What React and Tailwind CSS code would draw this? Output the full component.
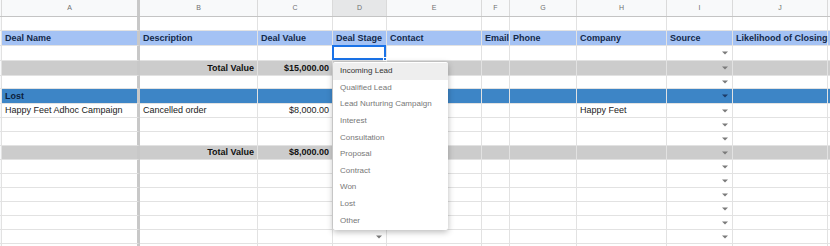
const cols = [
  { key: "stub", w: "w-[2px] bg-[#f8f9fa]" },
  { key: "A", w: "w-[138px] border-r-[3px] border-r-[#c8c8c8]" },
  { key: "B", w: "w-[118px]" },
  { key: "C", w: "w-[75px]" },
  { key: "D", w: "w-[54px]" },
  { key: "E", w: "w-[95px]" },
  { key: "F", w: "w-[28px]" },
  { key: "G", w: "w-[67px]" },
  { key: "H", w: "w-[90px]" },
  { key: "I", w: "w-[66px]" },
  { key: "J", w: "w-[95px]" },
  { key: "K", w: "w-[10px]" },
];

const headings = {
  A: "Deal Name",
  B: "Description",
  C: "Deal Value",
  D: "Deal Stage",
  E: "Contact",
  F: "Email",
  G: "Phone",
  H: "Company",
  I: "Source",
  J: "Likelihood of Closing",
};

const rows = [
  { h: "h-[14px]", type: "plain" },
  { h: "h-[15px]", type: "head" },
  { h: "h-[15px]", type: "plain", caret: true, selected: true },
  { h: "h-[15px]", type: "gray", caret: true, total: "$15,000.00" },
  { h: "h-[13px]", type: "plain", caret: true },
  { h: "h-[15px]", type: "blue", caret: true },
  {
    h: "h-[14px]",
    type: "plain",
    caret: true,
    data: { A: "Happy Feet Adhoc Campaign", B: "Cancelled order", C: "$8,000.00", H: "Happy Feet" },
  },
  { h: "h-[14px]", type: "plain", caret: true },
  { h: "h-[14px]", type: "plain", caret: true },
  { h: "h-[14px]", type: "gray", caret: true, total: "$8,000.00" },
  { h: "h-[14px]", type: "plain", caret: true },
  { h: "h-[14px]", type: "plain", caret: true },
  { h: "h-[14px]", type: "plain", caret: true },
  { h: "h-[14px]", type: "plain", caret: true },
  { h: "h-[14px]", type: "plain", caret: true },
  { h: "h-[14px]", type: "plain", caret: true, dCaret: true },
  { h: "h-[14px]", type: "plain", caret: true },
];

const stages = [
  "Incoming Lead",
  "Qualified Lead",
  "Lead Nurturing Campaign",
  "Interest",
  "Consultation",
  "Proposal",
  "Contract",
  "Won",
  "Lost",
  "Other",
];

const Caret = ({ dark }) => (
  <svg width="6" height="4" viewBox="0 0 6 4" className="absolute right-[4px] top-1/2 -translate-y-1/2">
    <path d="M0 0.5 L6 0.5 L3 3.5 Z" fill={dark ? "#1d3b66" : "#7a7a7a"} />
  </svg>
);

const rowBg = {
  plain: "bg-white",
  head: "bg-[#a4c2f4]",
  gray: "bg-[#cccccc]",
  blue: "bg-[#3d85c6]",
};

const Cell = ({ col, row }) => {
  let content = null;
  let align = "justify-start";
  let text = "text-[#222222] font-normal";

  if (row.type === "head" && headings[col.key]) {
    content = headings[col.key];
    text = "text-[#13294b] font-bold";
  }
  if (row.type === "blue" && col.key === "A") {
    content = "Lost";
    text = "text-[#0c1f3d] font-bold";
  }
  if (row.type === "gray" && col.key === "B") {
    content = "Total Value";
    align = "justify-end";
    text = "text-[#111111] font-bold";
  }
  if (row.type === "gray" && col.key === "C") {
    content = row.total;
    align = "justify-end";
    text = "text-[#111111] font-bold";
  }
  if (row.data && row.data[col.key]) {
    content = row.data[col.key];
    if (col.key === "C") align = "justify-end";
  }

  const bg = col.key === "stub" ? "" : rowBg[row.type];
  const pad = col.key === "stub" || col.key === "K" ? "" : "px-[3px]";

  return (
    <div
      className={`${col.w} ${bg} ${pad} relative shrink-0 border-r border-b border-[#e2e2e2] flex items-end ${align} pb-[1px] whitespace-nowrap text-[9px] leading-[11px] ${text}`}
    >
      {content}
      {row.caret && col.key === "I" && <Caret dark={row.type === "blue"} />}
      {row.dCaret && col.key === "D" && <Caret />}
      {row.selected && col.key === "D" && (
        <div className="absolute -left-[1px] -top-[1px] right-0 bottom-0 border-2 border-[#1a73e8]">
          <div className="absolute -right-[3px] -bottom-[3px] w-[4px] h-[4px] bg-[#1a73e8] border border-white" />
        </div>
      )}
    </div>
  );
};

export default function App() {
  return (
    <div className="relative w-[830px] h-[246px] overflow-hidden bg-white font-['Liberation_Sans',Arial,sans-serif]">
      <div className="flex h-[17px] bg-[#f8f9fa] border-b border-[#c4c4c4]">
        {cols.map((col) => (
          <div
            key={col.key}
            className={`${col.w} ${col.key === "D" ? "bg-[#e6e7e8]" : ""} shrink-0 border-r border-[#dadada] flex items-center justify-center text-[7px] text-[#707070]`}
          >
            {col.key === "stub" || col.key === "K" ? "" : col.key}
          </div>
        ))}
      </div>
      {rows.map((row, i) => (
        <div key={i} className={`flex ${row.h}`}>
          {cols.map((col) => (
            <Cell key={col.key} col={col} row={row} />
          ))}
        </div>
      ))}

      <div className="absolute left-[333px] top-[62px] w-[115px] bg-white rounded-[2px] shadow-[0_2px_6px_rgba(0,0,0,0.28)] py-[1px]">
        {stages.map((s, i) => (
          <div
            key={s}
            className={`h-[16.6px] flex items-center px-[7px] text-[8px] whitespace-nowrap ${
              i === 0 ? "bg-[#eeeeee] text-[#333333]" : "text-[#777777]"
            }`}
          >
            {s}
          </div>
        ))}
      </div>
    </div>
  );
}
